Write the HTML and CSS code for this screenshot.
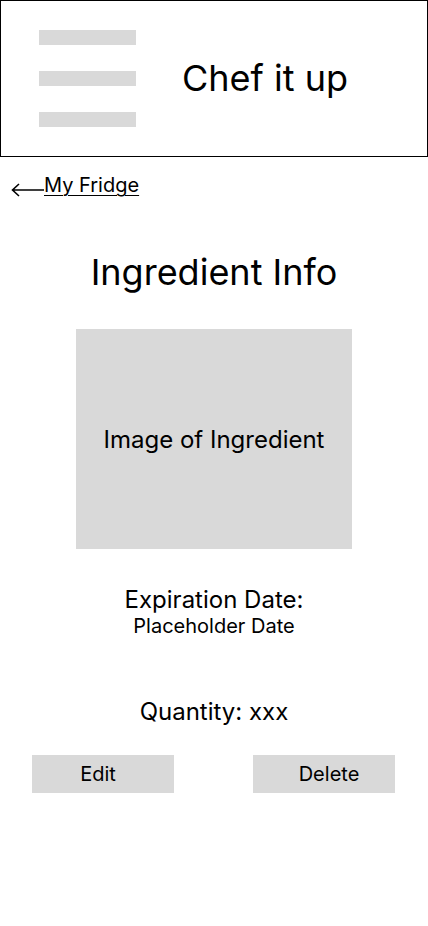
FILE: index.html
```html
<!DOCTYPE html>
<html lang="en">

<head>
    <meta charset="UTF-8">
    <meta name="viewport" content="width=device-width, initial-scale=1.0">
    <title>Ingredient Info</title>
    <link rel="stylesheet" href="styles.css">
</head>

<body>

    <div class="header">
        <div class="menu">
            <span class="bar"></span>
            <span class="bar"></span>
            <span class="bar"></span>
        </div>
        <div class="brand">Chef it up</div>
    </div>

    <a class="back" href="#">
        <svg class="arrow" width="33" height="14" viewBox="0 0 33 14">
            <path d="M33 7 H1.5 M8 1 L1.5 7 L8 13" fill="none" stroke="#000" stroke-width="1.6" />
        </svg>
        <span>My Fridge</span>
    </a>

    <div class="page-title">Ingredient Info</div>

    <div class="photo">Image of Ingredient</div>

    <div class="expiry">
        <div class="label">Expiration Date:</div>
        <div class="date">Placeholder Date</div>
    </div>

    <div class="quantity">Quantity: xxx</div>

    <div class="actions">
        <button class="btn btn-edit">Edit</button>
        <button class="btn btn-delete">Delete</button>
    </div>

</body>

</html>
```

FILE: styles.css
```css
* {
    margin: 0;
    padding: 0;
    box-sizing: border-box;
    font-family: 'Inter', 'Liberation Sans', sans-serif;
}

body {
    background: #fff;
    color: #000;
    width: 428px;
    min-height: 926px;
}

.header {
    height: 157px;
    border: 1px solid #000;
    display: flex;
    align-items: center;
}

.menu {
    display: flex;
    flex-direction: column;
    gap: 26px;
    margin-left: 38px;
}

.bar {
    display: block;
    width: 97px;
    height: 15px;
    background: #d9d9d9;
}

.brand {
    font-size: 36px;
    margin-left: 46px;
    padding-bottom: 2px;
}

.back {
    display: flex;
    align-items: center;
    margin: 22px 0 0 11px;
    color: #000;
    text-decoration: none;
    width: max-content;
}

.back span {
    font-size: 20px;
    text-decoration: underline;
    text-underline-offset: 3px;
    text-decoration-thickness: 1px;
    margin-top: -6px;
}

.arrow {
    display: block;
    margin-top: 3px;
}

.page-title {
    text-align: center;
    font-size: 36px;
    margin-top: 53px;
}

.photo {
    width: 276px;
    height: 220px;
    margin: 35px auto 0;
    background: #d9d9d9;
    display: flex;
    justify-content: center;
    align-items: center;
    font-size: 24px;
}

.expiry {
    text-align: center;
    margin-top: 36px;
}

.label {
    font-size: 24px;
    line-height: 30px;
}

.date {
    font-size: 20px;
    line-height: 22px;
}

.quantity {
    text-align: center;
    font-size: 24px;
    margin-top: 60px;
}

.actions {
    display: flex;
    justify-content: space-between;
    padding: 0 33px 0 32px;
    margin-top: 29px;
}

.btn {
    width: 142px;
    height: 38px;
    border: none;
    background: #d9d9d9;
    color: #000;
    font-size: 20px;
}

.btn-edit {
    padding-right: 10px;
}

.btn-delete {
    padding-left: 10px;
}
```
